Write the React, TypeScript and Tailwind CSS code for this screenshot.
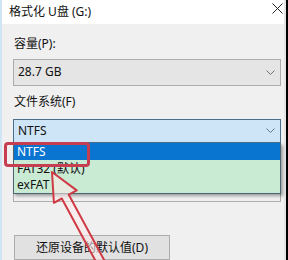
const font = {
  fontFamily: '"Noto Sans", "Noto Sans CJK SC", sans-serif',
};

function Chevron({ color }: { color: string }) {
  return (
    <svg width="9" height="5" viewBox="0 0 9 5" fill="none">
      <path d="M0.5 0.5 L4.5 4.5 L8.5 0.5" stroke={color} strokeWidth="1" />
    </svg>
  );
}

export default function App() {
  return (
    <div
      className="relative w-[288px] h-[260px] overflow-hidden flex bg-black text-[12px] text-[#111]"
      style={font}
    >
      {/* window frame left */}
      <div className="w-[2px] bg-[#cfe5f3]" />

      {/* window */}
      <div className="w-[282px] flex flex-col bg-[#f0f0f0]">
        {/* title bar */}
        <div className="h-[25px] bg-white flex justify-between pl-[7px] pr-[1px]">
          <span className="leading-[16px] mt-[4px]">格式化 U盘 (G:)</span>
          <svg width="11" height="11" viewBox="0 0 11 11" className="mt-[3px]">
            <path d="M0.5 0.5 L10.5 10.5 M10.5 0.5 L0.5 10.5" stroke="#222" strokeWidth="1" />
          </svg>
        </div>

        {/* capacity */}
        <div className="ml-[12px] mt-[12px] leading-[16px]">容量(P):</div>
        <div className="ml-[11px] mt-[7px] w-[268px] h-[29px] border border-[#adadad] bg-[#e5e5e5] flex items-center justify-between pl-[4px] pr-[5px]">
          <span>28.7 GB</span>
          <Chevron color="#707070" />
        </div>

        {/* file system */}
        <div className="ml-[12px] mt-[8px] leading-[16px]">文件系统(F)</div>
        <div className="ml-[11px] mt-[9px] w-[268px] h-[25px] border border-[#4a6f8c] bg-[#cde5f6] flex items-center justify-between pl-[4px] pr-[5px]">
          <span>NTFS</span>
          <Chevron color="#5c7a92" />
        </div>

        {/* dropdown list */}
        <div className="ml-[11px] w-[268px] h-[51px] border-x border-b border-[#4d6473] flex flex-col shadow-[2px_2px_3px_rgba(0,0,0,0.35)] relative z-10">
          <div className="h-[17px] bg-[#0a74d1] text-white pl-[3px] leading-[17px]">NTFS</div>
          <div className="h-[17px] bg-[#c9ead3] pl-[3px] leading-[17px]">FAT32 (默认)</div>
          <div className="h-[16px] bg-[#c9ead3] pl-[3px] leading-[16px]">exFAT</div>
        </div>
        {/* combo hidden behind the list */}
        <div className="ml-[11px] w-[268px] h-[9px] border-x border-b border-[#adadad]" />

        {/* restore button */}
        <div className="ml-[12px] mt-[33px] w-[156px] h-[26px] border border-[#adadad] bg-[#e1e1e1] flex items-center justify-center">
          还原设备的默认值(D)
        </div>
      </div>

      {/* window frame right */}
      <div className="w-[2px] bg-[#e4e4e4]" />
      <div className="flex-1 bg-black" />

      {/* annotation: red box */}
      <div className="absolute left-[4px] top-[142px] w-[86px] h-[25px] border-[3px] border-[#c63e50] rounded-[4px] z-20" />

      {/* annotation: arrow */}
      <svg
        className="absolute left-0 top-0 z-20 pointer-events-none"
        width="288"
        height="260"
        viewBox="0 0 288 260"
      >
        <polygon
          points="52,172 76.7,190.4 68.8,194.7 108.5,268.1 101.5,271.9 61.8,198.5 53.9,202.8"
          fill="rgba(255,235,235,0.55)"
          stroke="#cf3a44"
          strokeWidth="2"
          strokeLinejoin="round"
        />
      </svg>
    </div>
  );
}
